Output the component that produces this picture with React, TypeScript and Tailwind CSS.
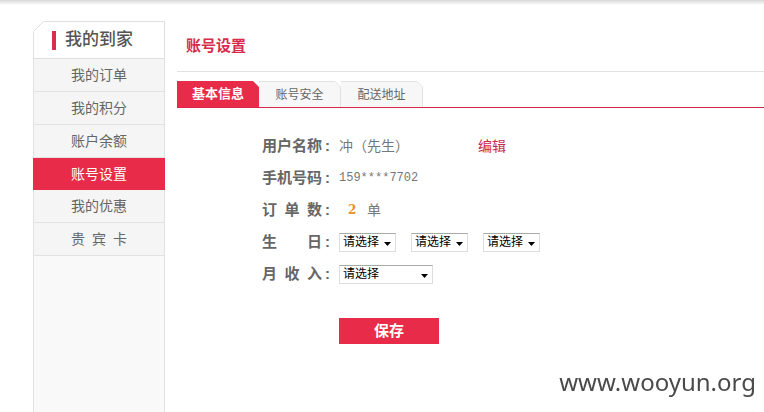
import type { ReactNode } from 'react';

const menu = ['我的订单', '我的积分', '账户余额', '账号设置', '我的优惠', '贵 宾 卡'];
const tabs = ['基本信息', '账号安全', '配送地址'];

function Sidebar() {
  return (
    <aside className="flex w-[132px] shrink-0 flex-col">
      <div className="relative flex h-[38px] shrink-0 items-center border border-[#dfdfdf] pl-[18px]">
        <svg className="absolute -top-px -left-px" width="12" height="12" viewBox="0 0 12 12" aria-hidden="true">
          <path d="M0 0H12L0 12Z" fill="#fff" />
          <path d="M0.5 12V10.5L10.5 0.5H12" fill="none" stroke="#dfdfdf" />
        </svg>
        <span className="mr-[9px] h-[19px] w-1 bg-[#d62f4c]" />
        <h2 className="text-[17px] leading-6 font-medium text-[#555]">我的到家</h2>
      </div>
      <nav className="flex-1 border-x border-[#e2e2e2] bg-[#f9f9f9]">
        <ul>
          {menu.map((item) => (
            <li key={item} className="-mx-px">
              <a
                href="#"
                aria-current={item === '账号设置' ? 'page' : undefined}
                className={
                  item === '账号设置'
                    ? 'flex h-8 items-center justify-center bg-[#e82b49] text-sm whitespace-pre text-white'
                    : 'flex h-[33px] items-center justify-center border border-t-0 border-[#e2e2e2] bg-[#f5f5f5] text-sm whitespace-pre text-[#666]'
                }
              >
                {item === '贵 宾 卡' ? <span className="w-14 whitespace-normal [text-align-last:justify]">{item}</span> : item}
              </a>
            </li>
          ))}
        </ul>
      </nav>
    </aside>
  );
}

function Tabs() {
  return (
    <div role="tablist" className="mt-[9px] flex h-[27px] border-b border-[#d5284a]">
      {tabs.map((tab, i) =>
        i === 0 ? (
          <button
            key={tab}
            role="tab"
            aria-selected="true"
            className="w-[82px] bg-[#e82b49] text-[13px] font-bold text-white [clip-path:polygon(0_0,76px_0,100%_6px,100%_100%,0_100%)]"
          >
            {tab}
          </button>
        ) : (
          <button
            key={tab}
            role="tab"
            aria-selected="false"
            className="relative w-[82px] border-t border-r border-[#e2e2e2] bg-[#f7f7f7] text-xs text-[#666]"
          >
            {tab}
            <svg className="absolute -top-px -right-px" width="7" height="7" viewBox="0 0 7 7" aria-hidden="true">
              <path d="M0 0H7V7Z" fill="#fff" />
              <path d="M0 0.5H1L6.5 6V7" fill="none" stroke="#e2e2e2" />
            </svg>
          </button>
        ),
      )}
    </div>
  );
}

function Row({ label, htmlFor, children }: { label: string; htmlFor?: string; children: ReactNode }) {
  const text = <span className="w-[60px] [text-align-last:justify]">{label}</span>;
  const style = 'flex w-[77px] shrink-0 text-[15px] font-bold text-[#666]';
  return (
    <div className="flex h-8 items-center text-sm text-[#777]">
      {htmlFor ? (
        <label htmlFor={htmlFor} className={style}>
          {text}<span className="pl-[3px]">:</span>
        </label>
      ) : (
        <span className={style}>
          {text}<span className="pl-[3px]">:</span>
        </span>
      )}
      {children}
    </div>
  );
}

function Select({ id, name, wide }: { id: string; name: string; wide?: boolean }) {
  return (
    <span className={wide ? 'relative w-[94px]' : 'relative w-[57px]'}>
      <select
        id={id}
        aria-label={name}
        className="block h-[19px] w-full appearance-none border border-[#ddd] border-t-[#aaa] bg-white pl-[3px] text-xs leading-4 text-black"
      >
        <option>请选择</option>
      </select>
      <svg className="pointer-events-none absolute top-[9px] right-[5px]" width="7" height="4" viewBox="0 0 7 4" aria-hidden="true">
        <path d="M0 0H7L3.5 4Z" fill="#000" />
      </svg>
    </span>
  );
}

export default function App() {
  return (
    <div className="flex min-h-screen flex-col bg-white font-['Liberation_Sans','Noto_Sans_CJK_SC',sans-serif]">
      <header className="h-[5px] bg-linear-to-b from-[#d8d8d8] to-white" />
      <div className="flex flex-1 gap-3 pt-4 pl-[33px]">
        <Sidebar />
        <main className="min-w-0 flex-1">
          <h1 className="flex h-[51px] items-center border-b border-[#e2e2e2] pl-[9px] text-[15px] font-bold text-[#d92b4b]">
            账号设置
          </h1>
          <Tabs />
          <form className="pt-[22px] pl-[85px]" onSubmit={(e) => e.preventDefault()}>
            <Row label="用户名称">
              <span className="w-[139px]">冲（先生）</span>
              <a href="#" className="text-[#c92a4c]">编辑</a>
            </Row>
            <Row label="手机号码">
              <span className="font-['Liberation_Mono',monospace] text-xs">159****7702</span>
            </Row>
            <Row label="订 单 数">
              <b className="w-7 pl-[9px] font-['DejaVu_Serif',serif] text-xs text-[#e8902c]">2</b>单
            </Row>
            <Row label="生 日" htmlFor="year">
              <span className="flex gap-[15px]">
                <Select id="year" name="生日年" />
                <Select id="month" name="生日月" />
                <Select id="day" name="生日日" />
              </span>
            </Row>
            <Row label="月 收 入" htmlFor="income">
              <Select id="income" name="月收入" wide />
            </Row>
            <button className="mt-7 ml-[77px] block h-[26px] w-[100px] bg-[#e82b49] text-[15px] font-bold text-white">
              保存
            </button>
          </form>
        </main>
      </div>
      <p className="fixed right-2 bottom-[14px] font-['Noto_Sans',sans-serif] text-2xl leading-8 text-[#4a4a4a]">
        www.wooyun.org
      </p>
    </div>
  );
}
